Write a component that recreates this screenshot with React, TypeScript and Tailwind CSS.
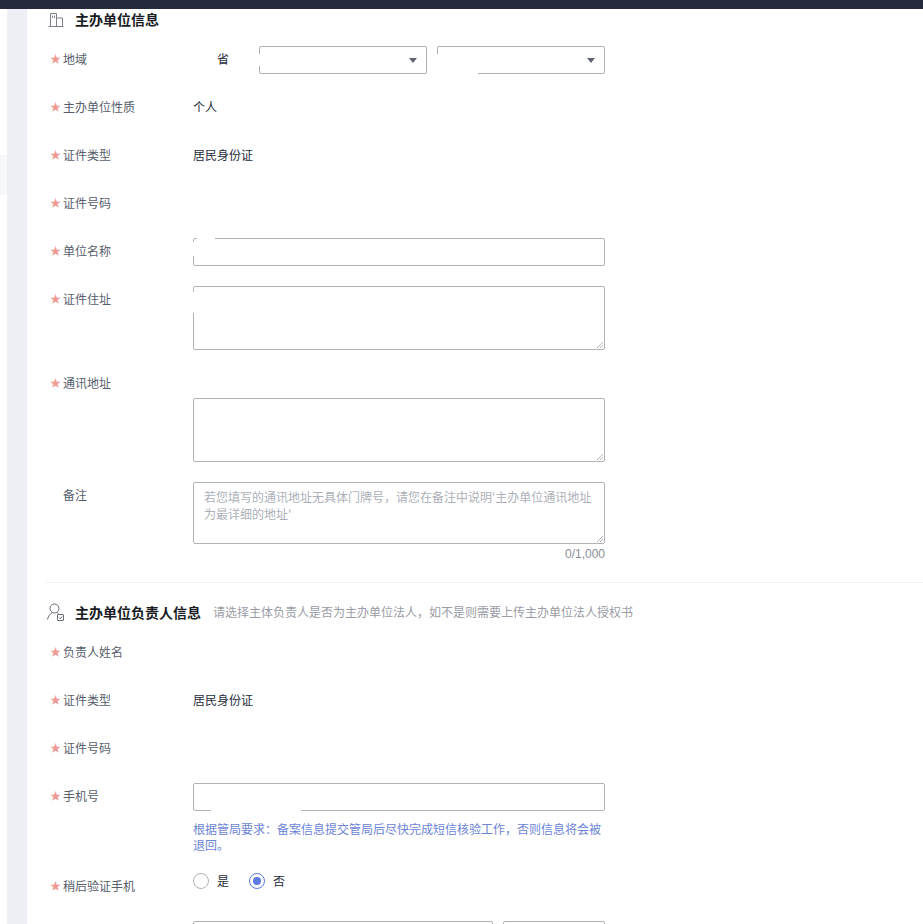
const font = '[font-family:"Noto_Sans_CJK_SC","Liberation_Sans",sans-serif]';

function BuildingIcon() {
  return (
    <svg width="16" height="14" viewBox="0 0 16 14" fill="none" stroke="#7d808a" strokeWidth="1">
      <path d="M2.5 13V0.5H8.5V13" />
      <path d="M8.5 5H14.5V13" />
      <path d="M0.5 13.5H15.5" />
      <path d="M4.5 2.5V5M6.5 2.5V5" />
    </svg>
  );
}

function UserCheckIcon() {
  return (
    <svg width="18" height="18" viewBox="0 0 18 18" fill="none" stroke="#6b6f7a" strokeWidth="1">
      <circle cx="7.5" cy="5.5" r="4.5" />
      <path d="M0.5 16.5C1.2 12.8 3.2 10.8 5.4 9.6M9.8 9.6C10.4 9.9 11 10.3 11.5 10.8" />
      <rect x="10.5" y="11.5" width="6" height="6" rx="0.5" />
      <path d="M12 14.5L13.3 15.8L15.2 13.4" />
    </svg>
  );
}

function Arrow() {
  return <span className="absolute right-[9px] top-[11px] w-0 h-0 border-x-[4px] border-x-transparent border-t-[5px] border-t-[#5f6370]" />;
}

function Row({ label, value, required = true, up, children, className = "mb-5" }: { label: string; value?: string; required?: boolean; up?: boolean; children?: React.ReactNode; className?: string }) {
  return (
    <div className={`flex ${className}`}>
      <div className={`w-[143px] shrink-0 h-7 flex items-center text-xs text-[#575d6c] ${up ? "pb-[3px]" : "pb-px"}`}>
        <span className="w-[13px] text-[#f09a94] text-[11px]">{required ? "★" : ""}</span>
        {label}
      </div>
      {value && <div className={`h-7 flex items-center text-xs text-[#252b3a] ${up ? "pb-[2px]" : ""}`}>{value}</div>}
      {children}
    </div>
  );
}

function Box({ h, children }: { h: string; children?: React.ReactNode }) {
  return <div className={`relative w-[412px] ${h} border border-[#b1b2b8] rounded-[2px] bg-white`}>{children}</div>;
}

function Patch({ className }: { className: string }) {
  return <span className={`absolute bg-white ${className}`} />;
}

function Grip() {
  return (
    <svg className="absolute right-0 bottom-0" width="8" height="8" viewBox="0 0 8 8" stroke="#b1b2b8" strokeWidth="1">
      <path d="M1 7L7 1M4 7L7 4" />
    </svg>
  );
}

export default function App() {
  return (
    <div className={`${font} h-[924px] overflow-hidden bg-white flex flex-col`}>
      <div className="h-[9px] shrink-0 bg-[#252b3a]" />
      <div className="flex-1 flex min-h-0">
        <div className="w-[7px] shrink-0 flex flex-col">
          <div className="h-[146px]" />
          <div className="h-[40px] bg-[#f7f8fa]" />
        </div>
        <div className="w-5 shrink-0 bg-[#eef0f5]" />
        <div className="flex-1 pl-[19px] min-w-0">
          <div className="h-[20px] flex items-center pl-[2px]">
            <span className="w-[27px] flex pt-[2px]"><BuildingIcon /></span>
            <span className="text-sm font-bold text-[#191c24]">主办单位信息</span>
          </div>
          <div className="pl-1 pt-[17px]">
            <Row label="地域" up>
              <div className="w-[66px] h-7 flex items-center pb-[3px] text-xs text-[#252b3a] pl-6">省</div>
              <div className="relative w-[168px] h-7 border border-[#b1b2b8] rounded-[2px]">
                <Arrow />
                <Patch className="-left-px top-[7px] w-[3px] h-3" />
              </div>
              <div className="relative w-[168px] h-7 ml-[10px] border border-[#b1b2b8] rounded-[2px]">
                <Arrow />
                <Patch className="left-[-1px] top-[7px] w-[3px] h-[21px]" />
                <Patch className="left-0 bottom-[-1px] w-10 h-[3px]" />
              </div>
            </Row>
            <Row label="主办单位性质" value="个人" up />
            <Row label="证件类型" value="居民身份证" up />
            <Row label="证件号码" up />
            <Row label="单位名称" up>
              <Box h="h-7">
                <Patch className="left-[3px] top-[-1px] w-[18px] h-[2px]" />
                <Patch className="left-[-1px] top-[3px] w-[3px] h-[14px]" />
              </Box>
            </Row>
            <Row label="证件住址" up>
              <Box h="h-16">
                <Patch className="left-[-1px] top-[5px] w-[3px] h-[21px]" />
                <Grip />
              </Box>
            </Row>
            <Row label="通讯地址" up>
              <div className="pt-7">
                <Box h="h-16">
                  <Grip />
                </Box>
              </div>
            </Row>
            <Row label="备注" required={false} up className="">
              <div>
                <Box h="h-[62px]">
                  <p className="px-[10px] pt-[5px] text-xs leading-[17px] text-[#adb0b8]">
                    若您填写的通讯地址无具体门牌号，请您在备注中说明'主办单位通讯地址为最详细的地址'
                  </p>
                  <Grip />
                </Box>
                <div className="h-[18px] pt-[2px] flex items-center justify-end text-xs text-[#8a8e99] [font-family:'Liberation_Sans',sans-serif]">0/1,000</div>
              </div>
            </Row>
          </div>
          <div className="mt-[20px] border-t border-[#eef0f5]" />
          <div className="mt-[20px] h-[18px] flex items-center pl-px">
            <span className="w-[28px] flex"><UserCheckIcon /></span>
            <span className="text-sm font-bold text-[#191c24] mr-[12px]">主办单位负责人信息</span>
            <span className="text-xs text-[#9a9ca5]">请选择主体负责人是否为主办单位法人，如不是则需要上传主办单位法人授权书</span>
          </div>
          <div className="pl-1 pt-[17px]">
            <Row label="负责人姓名" />
            <Row label="证件类型" value="居民身份证" />
            <Row label="证件号码" />
            <Row label="手机号" className="mb-[19px]">
              <div className="pt-px">
                <Box h="h-7">
                  <Patch className="left-[17px] bottom-[-1px] w-[90px] h-[3px]" />
                </Box>
                <p className="w-[412px] mt-[10px] text-xs leading-4 text-[#6c85d6]">
                  根据管局要求：备案信息提交管局后尽快完成短信核验工作，否则信息将会被退回。
                </p>
              </div>
            </Row>
            <Row label="稍后验证手机" className="mb-[21px]">
              <div className="h-7 -mt-[5px] flex items-center text-xs text-[#252b3a]">
                <span className="w-4 h-4 rounded-full border border-[#b1b2b8] mr-2" />
                <span className="mr-5">是</span>
                <span className="w-4 h-4 rounded-full border border-[#5e7ce0] mr-2 flex items-center justify-center">
                  <span className="w-2 h-2 rounded-full bg-[#5e7ce0]" />
                </span>
                <span>否</span>
              </div>
            </Row>
            <div className="flex pl-[143px] gap-[10px]">
              <div className="w-[300px] h-7 border border-[#b1b2b8] rounded-[2px]" />
              <div className="w-[102px] h-7 border border-[#b1b2b8] rounded-[2px]" />
            </div>
          </div>
        </div>
      </div>
    </div>
  );
}
